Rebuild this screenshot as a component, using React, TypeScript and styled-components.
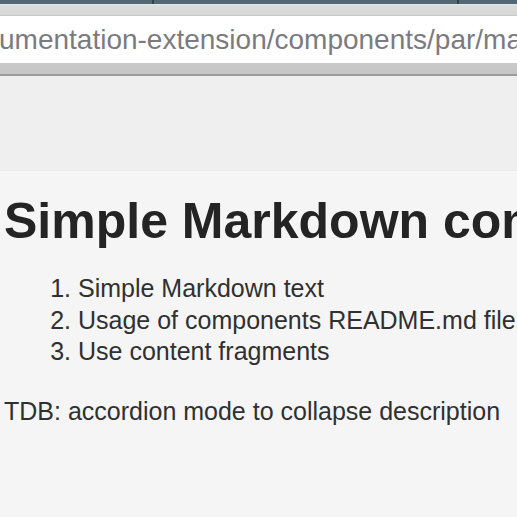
import styled, { createGlobalStyle } from "styled-components";

const GlobalStyle = createGlobalStyle`
  html,
  body {
    margin: 0;
    padding: 0;
    background: #f4f4f4;
  }

  body {
    font-family: "Liberation Sans", Arial, Helvetica, sans-serif;
    overflow: hidden;
  }
`;

const items = [
  "Simple Markdown text",
  "Usage of components README.md file",
  "Use content fragments",
];

export default function App() {
  return (
    <>
      <GlobalStyle />
      <Window>
        <TabStrip>
          <TabDivider />
          <TabDivider />
        </TabStrip>

        <Toolbar>
          <UrlField>
            <UrlText>umentation-extension/components/par/markdown.html</UrlText>
          </UrlField>
        </Toolbar>

        <PageHeader />

        <PageContent>
          <Title>Simple Markdown component</Title>

          <Steps>
            {items.map((item) => (
              <Step key={item}>{item}</Step>
            ))}
          </Steps>

          <Note>TDB: accordion mode to collapse description</Note>
        </PageContent>
      </Window>
    </>
  );
}

const Window = styled.div`
  width: 517px;
  height: 517px;
  overflow: hidden;
  display: flex;
  flex-direction: column;
`;

const TabStrip = styled.div`
  height: 4px;
  flex-shrink: 0;
  background: #526874;
  display: flex;
  justify-content: space-between;
  padding: 0 58px 0 152px;
`;

const TabDivider = styled.span`
  width: 2px;
  background: #34434b;
`;

const Toolbar = styled.div`
  flex-shrink: 0;
  padding: 10px 0 11px;
  background: linear-gradient(#dcdcdc, #d2d2d2 30%, #c6c6c6);
  border-top: 1px solid #e6e6e6;
  border-bottom: 2px solid #9c9c9c;
`;

const UrlField = styled.div`
  height: 47px;
  background: #ffffff;
  border-top: 1px solid #c9c9c9;
  display: flex;
  align-items: center;
  overflow: hidden;
`;

const UrlText = styled.span`
  font-size: 28px;
  color: #7b7b7f;
  white-space: nowrap;
  margin-left: -1px;
`;

const PageHeader = styled.div`
  height: 94px;
  flex-shrink: 0;
  background: #efefef;
  border-bottom: 1px solid #ebebeb;
`;

const PageContent = styled.main`
  flex: 1;
  background: #f5f5f5;
  padding: 20px 0 0 4px;
  color: #303030;
`;

const Title = styled.h1`
  margin: 0;
  font-size: 50px;
  line-height: 60px;
  font-weight: bold;
  color: #242424;
  white-space: nowrap;
`;

const Steps = styled.ol`
  margin: 22px 0 0;
  padding-left: 74px;
`;

const Step = styled.li`
  font-size: 25px;
  line-height: 31.5px;
  white-space: nowrap;
`;

const Note = styled.p`
  margin: 28px 0 0;
  font-size: 25px;
  line-height: 31.5px;
  white-space: nowrap;
`;
